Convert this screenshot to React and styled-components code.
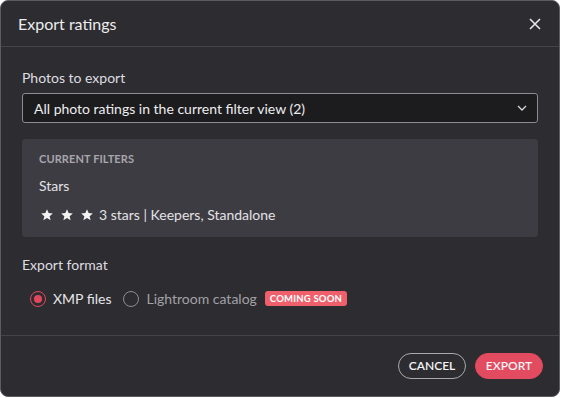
import React from "react";
import styled, { createGlobalStyle } from "styled-components";

const GlobalStyle = createGlobalStyle`
  body {
    margin: 0;
    background: #ffffff;
    font-family: "Lato", "Noto Sans", sans-serif;
  }
`;

const Dialog = styled.div`
  box-sizing: border-box;
  width: 560px;
  height: 397px;
  background: #2d2c31;
  border: 1px solid #5c5b61;
  border-radius: 8px;
  display: flex;
  flex-direction: column;
  color: #e6e6e8;
  overflow: hidden;
`;

const Header = styled.div`
  height: 45px;
  flex-shrink: 0;
  display: flex;
  align-items: center;
  justify-content: space-between;
  padding: 0 16px 0 17px;
  border-bottom: 1px solid #444349;
`;

const Title = styled.h2`
  margin: 0;
  font-size: 16px;
  font-weight: 400;
  color: #ececee;
`;

const CloseButton = styled.button`
  background: none;
  border: none;
  padding: 0;
  width: 16px;
  height: 16px;
  display: flex;
  align-items: center;
  justify-content: center;
  cursor: pointer;
`;

const Body = styled.div`
  flex: 1;
  padding: 22px 21px 0 21px;
  display: flex;
  flex-direction: column;
`;

const Label = styled.div`
  font-size: 14px;
  color: #dedde0;
  line-height: 18px;
  margin-bottom: ${(p) => p.$gap ?? 6}px;
`;

const Select = styled.div`
  box-sizing: border-box;
  height: 30px;
  background: #1c1c1e;
  border: 1px solid #8d8c90;
  border-radius: 3px;
  display: flex;
  align-items: center;
  justify-content: space-between;
  padding: 0 10px 0 11px;
  font-size: 14px;
  color: #ededee;
`;

const FilterCard = styled.div`
  margin-top: 16px;
  background: #3e3c43;
  border-radius: 4px;
  padding: 13px 17px 14px;
  height: 98px;
  box-sizing: border-box;
`;

const CardTitle = styled.div`
  font-size: 11px;
  font-weight: 700;
  letter-spacing: 0.1px;
  color: #a8a6ad;
  text-transform: uppercase;
  line-height: 14px;
`;

const CardText = styled.div`
  font-size: 14px;
  color: #e3e2e5;
  line-height: 18px;
  margin-top: ${(p) => p.$top}px;
  display: flex;
  align-items: center;
`;

const Stars = styled.span`
  display: inline-flex;
  gap: 6px;
  margin: 0 5px 0 1px;
`;

const Section = styled.div`
  margin-top: 19px;
`;

const RadioRow = styled.div`
  display: flex;
  align-items: center;
  padding-left: 8px;
  margin-top: 16px;
`;

const RadioOption = styled.label`
  display: flex;
  align-items: center;
  gap: 7px;
  font-size: 14px;
  color: ${(p) => (p.$disabled ? "#a3a2a7" : "#e6e6e8")};
  margin-right: ${(p) => (p.$disabled ? 8 : 12)}px;
`;

const RadioCircle = styled.span`
  box-sizing: border-box;
  width: 16px;
  height: 16px;
  border-radius: 50%;
  border: 1.5px solid ${(p) => (p.$checked ? "#e4475d" : "#8e8d92")};
  display: flex;
  align-items: center;
  justify-content: center;

  &::after {
    content: "";
    display: ${(p) => (p.$checked ? "block" : "none")};
    width: 8px;
    height: 8px;
    border-radius: 50%;
    background: #e4475d;
  }
`;

const Badge = styled.span`
  background: #f0606c;
  color: #fff;
  font-size: 9.5px;
  font-weight: 700;
  letter-spacing: 0.2px;
  padding: 0 5px;
  height: 15px;
  line-height: 15px;
  border-radius: 3px;
`;

const Footer = styled.div`
  height: 61px;
  flex-shrink: 0;
  border-top: 1px solid #444349;
  display: flex;
  align-items: center;
  justify-content: flex-end;
  gap: 9px;
  padding: 0 16px 1px 0;
  box-sizing: border-box;
`;

const Button = styled.button`
  height: 26px;
  width: 68px;
  border-radius: 13px;
  font-family: inherit;
  font-size: 12px;
  font-weight: 600;
  padding: 0;
  cursor: pointer;
  border: 1px solid ${(p) => (p.$primary ? "#e34b60" : "#a9a8ad")};
  background: ${(p) => (p.$primary ? "#e34b60" : "transparent")};
  color: #f4f4f5;
`;

const Star = () => (
  <svg width="14" height="14" viewBox="0 0 24 24">
    <path
      fill="#f2f2f3"
      d="M12 17.27L18.18 21l-1.64-7.03L22 9.24l-7.19-.61L12 2 9.19 8.63 2 9.24l5.46 4.73L5.82 21z"
    />
  </svg>
);

export default function App() {
  return (
    <>
      <GlobalStyle />
      <Dialog>
        <Header>
          <Title>Export ratings</Title>
          <CloseButton aria-label="Close">
            <svg width="12" height="12" viewBox="0 0 12 12">
              <path d="M1 1L11 11M11 1L1 11" stroke="#e6e6e8" strokeWidth="1.6" />
            </svg>
          </CloseButton>
        </Header>
        <Body>
          <Label>Photos to export</Label>
          <Select>
            <span>All photo ratings in the current filter view (2)</span>
            <svg width="10" height="6" viewBox="0 0 10 6">
              <path d="M1 1l4 4 4-4" fill="none" stroke="#d8d8da" strokeWidth="1.3" />
            </svg>
          </Select>
          <FilterCard>
            <CardTitle>Current filters</CardTitle>
            <CardText $top={11}>Stars</CardText>
            <CardText $top={11}>
              <Stars>
                <Star />
                <Star />
                <Star />
              </Stars>
              3 stars | Keepers, Standalone
            </CardText>
          </FilterCard>
          <Section>
            <Label $gap={0}>Export format</Label>
            <RadioRow>
              <RadioOption>
                <RadioCircle $checked />
                XMP files
              </RadioOption>
              <RadioOption $disabled>
                <RadioCircle />
                Lightroom catalog
              </RadioOption>
              <Badge>COMING SOON</Badge>
            </RadioRow>
          </Section>
        </Body>
        <Footer>
          <Button>CANCEL</Button>
          <Button $primary>EXPORT</Button>
        </Footer>
      </Dialog>
    </>
  );
}
